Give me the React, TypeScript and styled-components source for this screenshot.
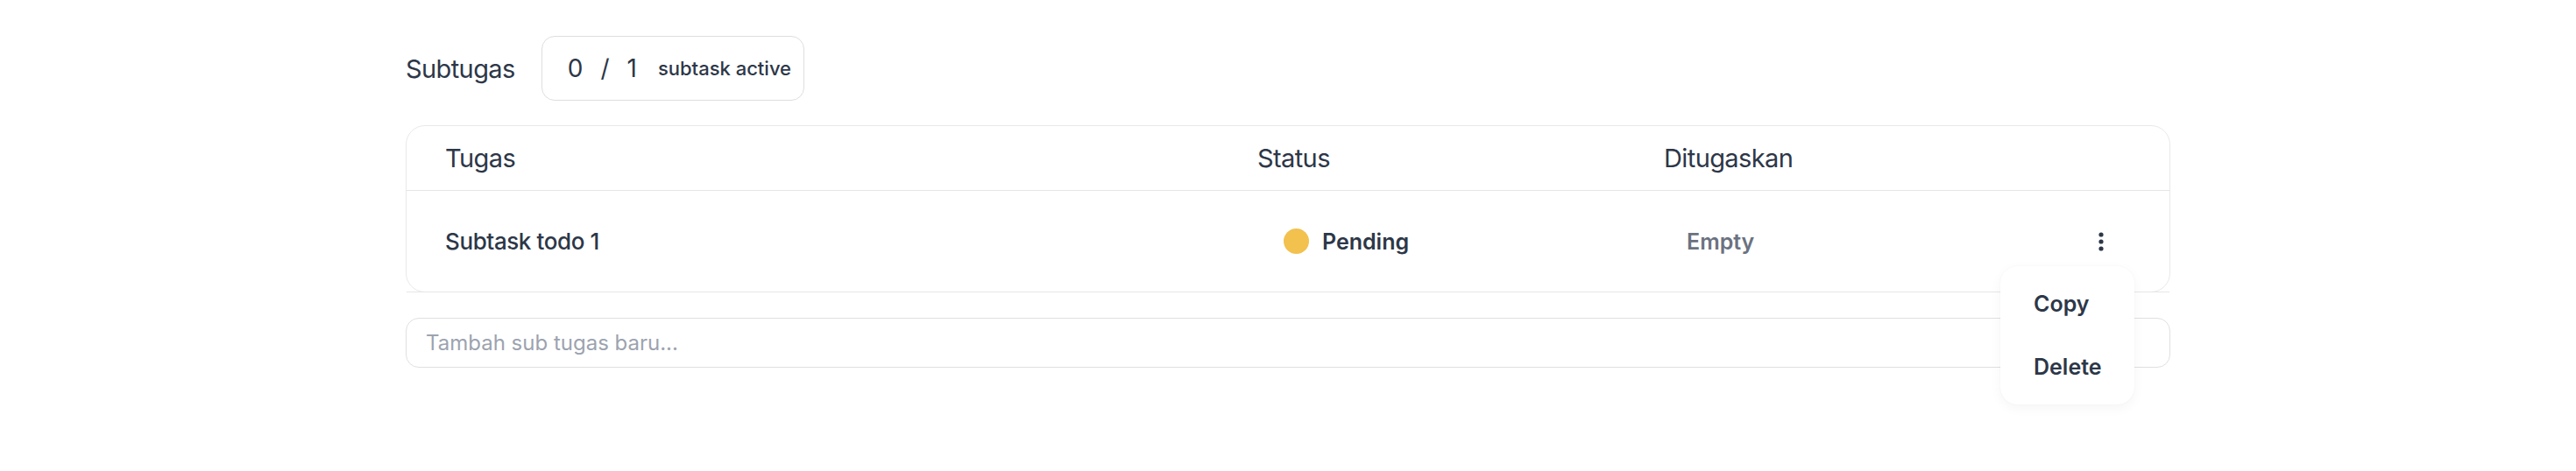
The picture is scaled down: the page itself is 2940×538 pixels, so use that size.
import React from "react";
import styled, { createGlobalStyle } from "styled-components";

const GlobalStyle = createGlobalStyle`
  html, body {
    margin: 0;
    padding: 0;
    background: #ffffff;
    min-height: 100vh;
  }
  #root {
    min-height: 100vh;
  }
  body {
    font-family: Inter, "Noto Sans", "Liberation Sans", sans-serif;
    color: #2d3748;
    -webkit-font-smoothing: antialiased;
  }
  * { box-sizing: border-box; }
`;

const Page = styled.div`
  width: 2014px;
  margin: 0 auto;
  padding: 41px 0 100px;
  display: flex;
  flex-direction: column;
`;

const SectionHeader = styled.div`
  display: flex;
  align-items: center;
  gap: 30px;
  height: 74px;
`;

const SectionTitle = styled.h2`
  margin: 0;
  font-size: 29px;
  letter-spacing: -0.6px;
  font-weight: 400;
  color: #2d3748;
  line-height: 1;
`;

const Counter = styled.div`
  height: 74px;
  display: flex;
  align-items: center;
  padding: 0 14px 0 29px;
  border: 1px solid #dedede;
  border-radius: 15px;
  color: #2d3748;
`;

const CounterNumber = styled.span`
  font-size: 28px;
  font-weight: 400;
  line-height: 1;
`;

const CounterSlash = styled(CounterNumber)`
  margin: 0 20px;
`;

const CounterLabel = styled.span`
  margin-left: 24px;
  font-size: 22px;
  font-weight: 500;
  line-height: 1;
`;

const Card = styled.div`
  margin-top: 28px;
  border: 1px solid #e9e9e9;
  border-radius: 22px;
  background: #ffffff;
`;

const Row = styled.div<{ $head?: boolean }>`
  display: grid;
  grid-template-columns: 927px 464px 1fr 68px;
  align-items: center;
  padding: 0 44px;
  height: ${(p) => (p.$head ? "74px" : "116px")};
  border-bottom: 1px solid #e6e6e6;
  margin-bottom: ${(p) => (p.$head ? "0" : "-1px")};
`;

const HeadCell = styled.div`
  font-size: 29px;
  letter-spacing: -0.6px;
  font-weight: 400;
  color: #2d3748;
`;

const TaskName = styled.div`
  font-size: 26px;
  letter-spacing: -0.4px;
  font-weight: 500;
  color: #2d3748;
`;

const StatusCell = styled.div`
  display: flex;
  align-items: center;
  gap: 15px;
  padding-left: 30px;
  font-size: 25px;
  font-weight: 600;
  color: #2d3748;
`;

const StatusDot = styled.span<{ $color: string }>`
  width: 29px;
  height: 29px;
  border-radius: 50%;
  background: ${(p) => p.$color};
  flex-shrink: 0;
`;

const AssigneeCell = styled.div`
  padding-left: 26px;
  font-size: 25px;
  font-weight: 600;
  color: #6b7280;
`;

const ActionCell = styled.div`
  display: flex;
  justify-content: center;
`;

const MenuAnchor = styled.div`
  position: relative;
`;

const DotsButton = styled.button`
  width: 40px;
  height: 40px;
  display: flex;
  align-items: center;
  justify-content: center;
  border: none;
  background: transparent;
  padding: 0;
  color: #2d3748;
  cursor: pointer;
`;

const Menu = styled.div`
  position: absolute;
  top: 48px;
  right: -18px;
  width: 153px;
  padding: 7px 0;
  background: #ffffff;
  border-radius: 20px;
  box-shadow: 0 4px 14px rgba(15, 23, 42, 0.045), 0 0 2px rgba(15, 23, 42, 0.04);
  z-index: 10;
`;

const MenuItem = styled.div`
  height: 72px;
  display: flex;
  align-items: center;
  padding-left: 38px;
  font-size: 25px;
  font-weight: 600;
  color: #2d3748;
`;

const NewTaskInput = styled.input`
  margin-top: 29px;
  height: 57px;
  width: 100%;
  border: 1px solid #e0e0e0;
  border-radius: 15px;
  padding: 0 22px;
  font-family: Inter, "Noto Sans", "Liberation Sans", sans-serif;
  font-size: 24px;
  color: #2d3748;
  outline: none;
  &::placeholder {
    color: #9ca3af;
  }
`;

const VerticalDots = () => (
  <svg width="8" height="24" viewBox="0 0 8 24" fill="currentColor">
    <circle cx="4" cy="4" r="2.6" />
    <circle cx="4" cy="12" r="2.6" />
    <circle cx="4" cy="20" r="2.6" />
  </svg>
);

export default function App() {
  return (
    <>
      <GlobalStyle />
      <Page>
        <SectionHeader>
          <SectionTitle>Subtugas</SectionTitle>
          <Counter>
            <CounterNumber>0</CounterNumber>
            <CounterSlash>/</CounterSlash>
            <CounterNumber>1</CounterNumber>
            <CounterLabel>subtask active</CounterLabel>
          </Counter>
        </SectionHeader>

        <Card>
          <Row $head>
            <HeadCell>Tugas</HeadCell>
            <HeadCell>Status</HeadCell>
            <HeadCell>Ditugaskan</HeadCell>
            <div />
          </Row>
          <Row>
            <TaskName>Subtask todo 1</TaskName>
            <StatusCell>
              <StatusDot $color="#f2c14e" />
              Pending
            </StatusCell>
            <AssigneeCell>Empty</AssigneeCell>
            <ActionCell>
              <MenuAnchor>
                <DotsButton aria-label="Opsi">
                  <VerticalDots />
                </DotsButton>
                <Menu>
                  <MenuItem>Copy</MenuItem>
                  <MenuItem>Delete</MenuItem>
                </Menu>
              </MenuAnchor>
            </ActionCell>
          </Row>
        </Card>

        <NewTaskInput placeholder="Tambah sub tugas baru..." />
      </Page>
    </>
  );
}
